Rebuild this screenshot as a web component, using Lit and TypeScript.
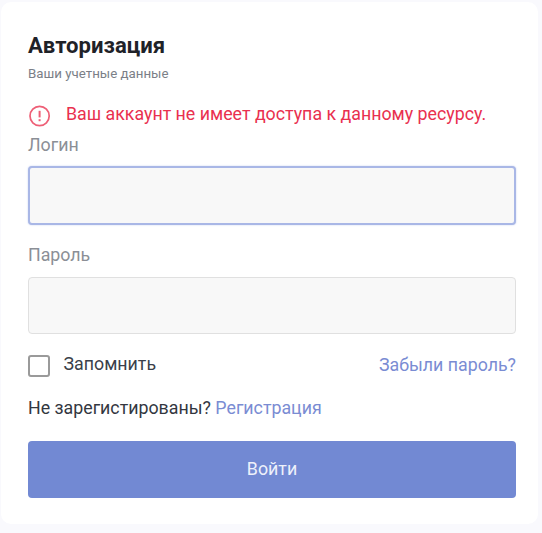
import { LitElement, html, css } from "lit";
import { customElement } from "lit/decorators.js";

@customElement("app-root")
export class AppRoot extends LitElement {
  static styles = css`
    :host {
      display: block;
      width: 542px;
      height: 533px;
      background: #f9f9fd;
      font-family: Roboto, "Liberation Sans", sans-serif;
      overflow: hidden;
    }
    .card {
      box-sizing: border-box;
      width: 537px;
      height: 522px;
      margin-top: 2px;
      margin-left: 1px;
      background: #fff;
      border-radius: 10px;
      padding: 31px 21px 0 27px;
      display: flex;
      flex-direction: column;
    }
    h1 {
      margin: 0;
      font-size: 22.1px;
      line-height: 24px;
      font-weight: 700;
      color: #1f2228;
    }
    .sub {
      margin-top: 9px;
      font-size: 13.3px;
      line-height: 16px;
      color: #7b7f87;
    }
    .error {
      margin-top: 20px;
      display: flex;
      align-items: center;
      gap: 14px;
      height: 24px;
      font-size: 17.8px;
      color: #e9304f;
    }
    .error svg { flex: none; margin-top: 4px; }
    .error span { margin-top: -2px; }
    label {
      display: block;
      font-size: 17.8px;
      line-height: 24px;
      color: #8b8f96;
    }
    .login { margin-top: 7px; }
    .pass { margin-top: 18px; }
    .input {
      box-sizing: border-box;
      display: block;
      width: 488px;
      margin-top: 10px;
      background: #f8f8f8;
      border: 1px solid #e0e0e0;
      border-radius: 4px;
    }
    .input.focus {
      margin-top: 9px;
      height: 59px;
      border: 2px solid #a9b7e6;
      box-shadow: 0 0 2px #c6d0f0;
    }
    .input.second { height: 57px; }
    .row {
      margin-top: 20px;
      display: flex;
      align-items: center;
      width: 488px;
      height: 24px;
    }
    .check {
      box-sizing: border-box;
      width: 22px;
      height: 22px;
      border: 2px solid #9a9a9a;
      border-radius: 3px;
      background: #fff;
      margin-right: 13.5px;
    }
    .remember { font-size: 17.8px; color: #3a3f4a; margin-top: -6px; }
    a { color: #7a8cd3; text-decoration: none; }
    .forgot { margin-left: auto; font-size: 17.8px; margin-top: -3px; }
    .reg {
      margin-top: 18px;
      font-size: 17.8px;
      line-height: 24px;
      color: #33373f;
    }
    button {
      display: block;
      width: 488px;
      height: 57px;
      margin-top: 21px;
      padding: 0 0 3px;
      border: 0;
      border-radius: 4px;
      background: #7289d3;
      color: #eef1fb;
      font: 400 17.8px Roboto, "Liberation Sans", sans-serif;
    }
  `;

  render() {
    return html`
      <div class="card">
        <h1>Авторизация</h1>
        <div class="sub">Ваши учетные данные</div>
        <div class="error">
          <svg width="24" height="24" viewBox="0 0 24 24" fill="none">
            <circle cx="11.6" cy="12" r="9.6" stroke="#ee5f76" stroke-width="1.7" />
            <path d="M11.6 6.8v6.6" stroke="#ee5f76" stroke-width="2" />
            <path d="M11.6 15.2v2" stroke="#ee5f76" stroke-width="2" />
          </svg>
          <span>Ваш аккаунт не имеет доступа к данному ресурсу.</span>
        </div>
        <label class="login">Логин</label>
        <div class="input focus"></div>
        <label class="pass">Пароль</label>
        <div class="input second"></div>
        <div class="row">
          <div class="check"></div>
          <span class="remember">Запомнить</span>
          <a class="forgot" href="#">Забыли пароль?</a>
        </div>
        <div class="reg">Не зарегистированы? <a href="#">Регистрация</a></div>
        <button>Войти</button>
      </div>
    `;
  }
}
